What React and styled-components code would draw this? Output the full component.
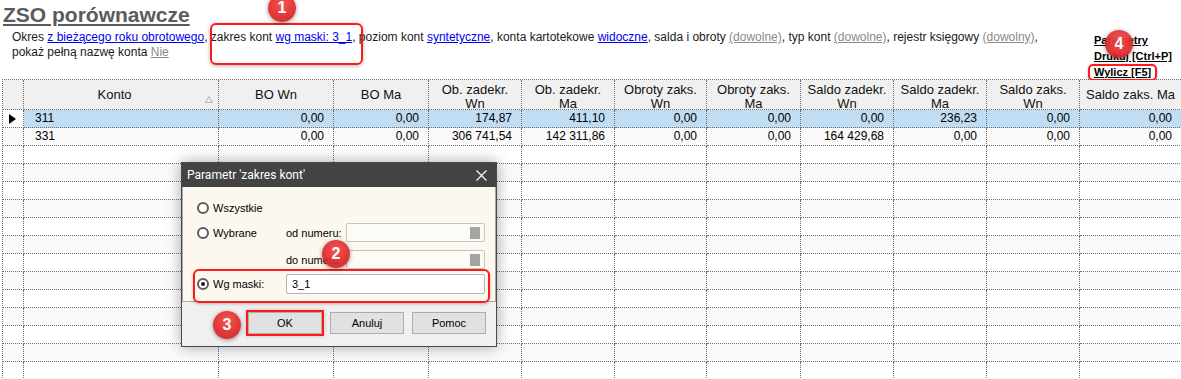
import React from 'react';
import styled, { createGlobalStyle } from 'styled-components';

const GlobalStyle = createGlobalStyle`
  html, body {
    margin: 0;
    padding: 0;
    overflow: hidden;
    background: #ffffff;
  }
  body {
    font-family: "Liberation Sans", Arial, sans-serif;
    color: #000;
  }
`;

const Page = styled.div`
  position: relative;
  width: 1181px;
  height: 379px;
  overflow: hidden;
`;

const TopBar = styled.div`
  display: flex;
  height: 79px;
`;

const Heading = styled.div`
  width: 1062px;
  margin-right: 12px;
`;

const Title = styled.h1`
  margin: 0;
  padding: 3px 0 0 3px;
  font-size: 21px;
  line-height: 24px;
  font-weight: bold;
  color: #5b5b5b;
  text-decoration: underline;
  text-decoration-thickness: 2px;
  text-underline-offset: 2px;
`;

const Description = styled.div`
  margin-top: 3px;
  padding-left: 12px;
  font-size: 12px;
  line-height: 15px;
  color: #1a1a1a;
`;

const Link = styled.a`
  color: ${props => props.$tone === 'gray' ? '#8a8a8a' : '#0000ee'};
  text-decoration: underline;
  cursor: pointer;
`;

const Links = styled.div`
  display: flex;
  flex-direction: column;
  align-items: flex-start;
  margin: 32px 0 0 20px;
`;

const ActionLink = styled.a`
  display: block;
  box-sizing: border-box;
  height: ${props => props.$marked ? '17px' : '16px'};
  line-height: ${props => props.$marked ? '13px' : '16px'};
  font-size: 11px;
  font-weight: bold;
  color: #000;
  text-decoration: underline;
  white-space: nowrap;
  cursor: pointer;
  ${props => props.$marked && `
    margin-left: -6px;
    padding: 0 4px;
    border: 2px solid #ff1a1a;
    border-radius: 5px;
    box-shadow: 0 1px 3px rgba(0, 0, 0, 0.3);
  `}
`;

const Grid = styled.div`
  margin-left: 2px;
  border-left: 1px dotted #6e6e6e;
  border-top: 1px dotted #6e6e6e;
  font-size: 12px;
`;

const HeadRow = styled.div`
  display: flex;
  height: 30px;
`;

const HeadCell = styled.div`
  box-sizing: border-box;
  flex: 0 0 ${props => props.$width}px;
  height: 30px;
  display: flex;
  align-items: ${props => props.$multi ? 'flex-start' : 'center'};
  padding-top: ${props => props.$multi ? '3px' : '0'};
  background: #f0f0f0;
  border-right: 1px dotted #6e6e6e;
  border-bottom: 1px dotted #6e6e6e;
  overflow: hidden;
  font-size: 13px;
  line-height: 14px;
  color: #111;
`;

const HeadLabel = styled.div`
  flex: 1;
  text-align: center;
  white-space: nowrap;
`;

const SortIcon = styled.svg`
  flex: 0 0 8px;
  margin: 9px 5px 0 0;
`;

const Row = styled.div`
  display: flex;
  height: 18px;
  background: ${props => props.$alt ? '#fafafa' : '#ffffff'};
`;

const Cell = styled.div`
  box-sizing: border-box;
  flex: 0 0 ${props => props.$width}px;
  height: 18px;
  line-height: 17px;
  padding: ${props => props.$align === 'left' ? '0 0 0 11px' : '0 9px 0 0'};
  text-align: ${props => props.$align === 'left' ? 'left' : 'right'};
  background: ${props => props.$selected ? '#c1ddf4' : 'transparent'};
  border-right: 1px dotted #6e6e6e;
  border-bottom: 1px dotted #6e6e6e;
  white-space: nowrap;
  overflow: hidden;
`;

const Marker = styled.div`
  box-sizing: border-box;
  flex: 0 0 21px;
  height: 18px;
  display: flex;
  align-items: center;
  padding-left: 6px;
  border-right: 1px dotted #6e6e6e;
  border-bottom: 1px dotted #6e6e6e;
`;

const MarkerHead = styled(Marker)`
  height: 30px;
  background: #f0f0f0;
`;

const Dialog = styled.div`
  position: absolute;
  left: 181px;
  top: 162px;
  width: 316px;
  box-sizing: border-box;
  border: 1px solid #4a4a4a;
  background: #f0f0f0;
  box-shadow: 0 0 14px rgba(0, 0, 0, 0.35);
  font-size: 11px;
`;

const TitleBar = styled.div`
  height: 24px;
  display: flex;
  align-items: center;
  justify-content: space-between;
  padding: 0 9px 0 5px;
  background: #434343;
  color: #ffffff;
  font-family: Roboto, "Liberation Sans", sans-serif;
  font-size: 12px;
`;

const DialogBody = styled.div`
  box-sizing: border-box;
  height: 115px;
  padding: 11px 0 0 14px;
  background: #fcf8ef;
  border: 1px solid #a8a8a8;
  border-top: none;
`;

const OptionRow = styled.div`
  display: flex;
  align-items: center;
  height: ${props => props.$height || 19}px;
  margin-top: ${props => props.$gap || 0}px;
`;

const MaskRow = styled.div`
  box-sizing: border-box;
  display: flex;
  align-items: center;
  width: 297px;
  height: 34px;
  margin-left: -4px;
  padding: 0 0 4px 2px;
  border: 2px solid #ff1a1a;
  border-radius: 6px;
  box-shadow: 0 1px 3px rgba(0, 0, 0, 0.25);
`;

const Choice = styled.div`
  flex: 0 0 89px;
  display: flex;
  align-items: center;
  gap: 4px;
`;

const Radio = styled.span`
  box-sizing: border-box;
  width: 12px;
  height: 12px;
  border-radius: 50%;
  border: 2px solid #5c5c5c;
  background: #ffffff;
  display: flex;
  align-items: center;
  justify-content: center;
  &::after {
    content: '';
    width: 4px;
    height: 4px;
    border-radius: 50%;
    background: ${props => props.$checked ? '#1a1a1a' : 'transparent'};
  }
`;

const FieldLabel = styled.div`
  flex: 0 0 60px;
  white-space: nowrap;
`;

const Field = styled.div`
  box-sizing: border-box;
  flex: 0 0 ${props => props.$width}px;
  height: ${props => props.$disabled ? 19 : 20}px;
  display: flex;
  align-items: center;
  justify-content: space-between;
  padding: 0 4px 0 5px;
  border: 1px solid ${props => props.$disabled ? '#c4c4c4' : '#b4b4b4'};
  border-radius: 2px;
  background: ${props => props.$disabled ? '#fdfbf6' : '#ffffff'};
`;

const FieldKnob = styled.span`
  width: 10px;
  height: 12px;
  background: #a4a4a4;
`;

const Footer = styled.div`
  height: 44px;
  box-sizing: border-box;
  display: flex;
  justify-content: flex-end;
  gap: 8px;
  padding: 10px 10px 0 0;
`;

const Button = styled.button`
  box-sizing: border-box;
  width: 74px;
  height: 22px;
  padding: 0;
  border: 1px solid #adadad;
  background: #e1e1e1;
  font-family: "Liberation Sans", Arial, sans-serif;
  font-size: 11px;
  color: #000;
  ${props => props.$marked && `
    outline: 2px solid #ff1a1a;
    box-shadow: 0 0 4px 2px rgba(0, 0, 0, 0.2);
  `}
`;

const Callout = styled.div`
  position: absolute;
  left: ${props => props.$x}px;
  top: ${props => props.$y}px;
  width: ${props => props.$w}px;
  height: ${props => props.$h}px;
  box-sizing: border-box;
  border: 2px solid #ff1a1a;
  border-radius: 6px;
  box-shadow: 0 1px 4px rgba(0, 0, 0, 0.3);
  pointer-events: none;
`;

const Badge = styled.div`
  position: absolute;
  left: ${props => props.$x - 14}px;
  top: ${props => props.$y - 14}px;
  width: 28px;
  height: 28px;
  border-radius: 50%;
  display: flex;
  align-items: center;
  justify-content: center;
  background: radial-gradient(circle at 50% 35%, #f04a4a 0%, #e02a2a 55%, #c71c1c 100%);
  box-shadow: 0 1px 4px rgba(0, 0, 0, 0.45);
  color: #ffffff;
  font-family: "Liberation Sans", Arial, sans-serif;
  font-weight: bold;
  font-size: 16px;
  opacity: 0.93;
`;

const columns = [
  { label: ['Konto'], width: 195, align: 'left', sort: true },
  { label: ['BO Wn'], width: 115 },
  { label: ['BO Ma'], width: 95 },
  { label: ['Ob. zadekr.', 'Wn'], width: 93 },
  { label: ['Ob. zadekr.', 'Ma'], width: 93 },
  { label: ['Obroty zaks.', 'Wn'], width: 92 },
  { label: ['Obroty zaks.', 'Ma'], width: 94 },
  { label: ['Saldo zadekr.', 'Wn'], width: 93 },
  { label: ['Saldo zadekr.', 'Ma'], width: 93 },
  { label: ['Saldo zaks.', 'Wn'], width: 93 },
  { label: ['Saldo zaks. Ma'], width: 102 },
];

const accounts = [
  { konto: '311', selected: true, values: ['0,00', '0,00', '174,87', '411,10', '0,00', '0,00', '0,00', '236,23', '0,00', '0,00'] },
  { konto: '331', values: ['0,00', '0,00', '306 741,54', '142 311,86', '0,00', '0,00', '164 429,68', '0,00', '0,00', '0,00'] },
];

const emptyRows = Array.from({ length: 13 });

const App = () => {
  return (
    <Page>
      <GlobalStyle />
      <TopBar>
        <Heading>
          <Title>ZSO porównawcze</Title>
          <Description>
            <span>Okres </span><Link>z bieżącego roku obrotowego</Link>
            <span>, zakres kont </span><Link>wg maski: 3_1</Link>
            <span>, poziom kont </span><Link>syntetyczne</Link>
            <span>, konta kartotekowe </span><Link>widoczne</Link>
            <span>, salda i obroty </span><Link $tone="gray">(dowolne)</Link>
            <span>, typ kont </span><Link $tone="gray">(dowolne)</Link>
            <span>, rejestr księgowy </span><Link $tone="gray">(dowolny)</Link>
            <span>, </span>
            <span>pokaż pełną nazwę konta </span><Link $tone="gray">Nie</Link>
          </Description>
        </Heading>
        <Links>
          <ActionLink>Parametry</ActionLink>
          <ActionLink>Drukuj [Ctrl+P]</ActionLink>
          <ActionLink $marked>Wylicz [F5]</ActionLink>
        </Links>
      </TopBar>

      <Grid>
        <HeadRow>
          <MarkerHead />
          {columns.map((col, i) => (
            <HeadCell key={i} $width={col.width} $multi={col.label.length > 1}>
              <HeadLabel>
                {col.label.map((line, j) => <div key={j}>{line}</div>)}
              </HeadLabel>
              {col.sort && (
                <SortIcon width="8" height="7" viewBox="0 0 8 7">
                  <polygon points="4,0.5 7.5,6.5 0.5,6.5" fill="none" stroke="#b4b4b4" strokeWidth="1" />
                </SortIcon>
              )}
            </HeadCell>
          ))}
        </HeadRow>

        {accounts.map((acc, i) => (
          <Row key={acc.konto} $alt={i % 2 === 1}>
            <Marker>
              {acc.selected && (
                <svg width="7" height="10" viewBox="0 0 7 10">
                  <polygon points="0,0 7,5 0,10" fill="#000" />
                </svg>
              )}
            </Marker>
            <Cell $width={columns[0].width} $align="left" $selected={acc.selected}>{acc.konto}</Cell>
            {acc.values.map((v, j) => (
              <Cell key={j} $width={columns[j + 1].width} $selected={acc.selected}>{v}</Cell>
            ))}
          </Row>
        ))}

        {emptyRows.map((_, i) => (
          <Row key={i} $alt={(i + accounts.length) % 2 === 1}>
            <Marker />
            {columns.map((col, j) => <Cell key={j} $width={col.width} />)}
          </Row>
        ))}
      </Grid>

      <Dialog>
        <TitleBar>
          <span>Parametr 'zakres kont'</span>
          <svg width="11" height="11" viewBox="0 0 11 11">
            <path d="M0.5 0.5 L10.5 10.5 M10.5 0.5 L0.5 10.5" stroke="#ffffff" strokeWidth="1.1" />
          </svg>
        </TitleBar>
        <DialogBody>
          <OptionRow $height={20}>
            <Choice><Radio /><span>Wszystkie</span></Choice>
          </OptionRow>
          <OptionRow $gap={5}>
            <Choice><Radio /><span>Wybrane</span></Choice>
            <FieldLabel>od numeru:</FieldLabel>
            <Field $width={139} $disabled><span /><FieldKnob /></Field>
          </OptionRow>
          <OptionRow $gap={8}>
            <Choice />
            <FieldLabel>do numeru:</FieldLabel>
            <Field $width={139} $disabled><span /><FieldKnob /></Field>
          </OptionRow>
          <MaskRow>
            <Choice><Radio $checked /><span>Wg maski:</span></Choice>
            <Field $width={199}>3_1</Field>
          </MaskRow>
        </DialogBody>
        <Footer>
          <Button $marked>OK</Button>
          <Button>Anuluj</Button>
          <Button>Pomoc</Button>
        </Footer>
      </Dialog>

      <Callout $x={210} $y={23} $w={153} $h={42} />

      <Badge $x={282} $y={8}>1</Badge>
      <Badge $x={336} $y={254}>2</Badge>
      <Badge $x={227} $y={325}>3</Badge>
      <Badge $x={1119} $y={44}>4</Badge>
    </Page>
  );
};

export default App;
